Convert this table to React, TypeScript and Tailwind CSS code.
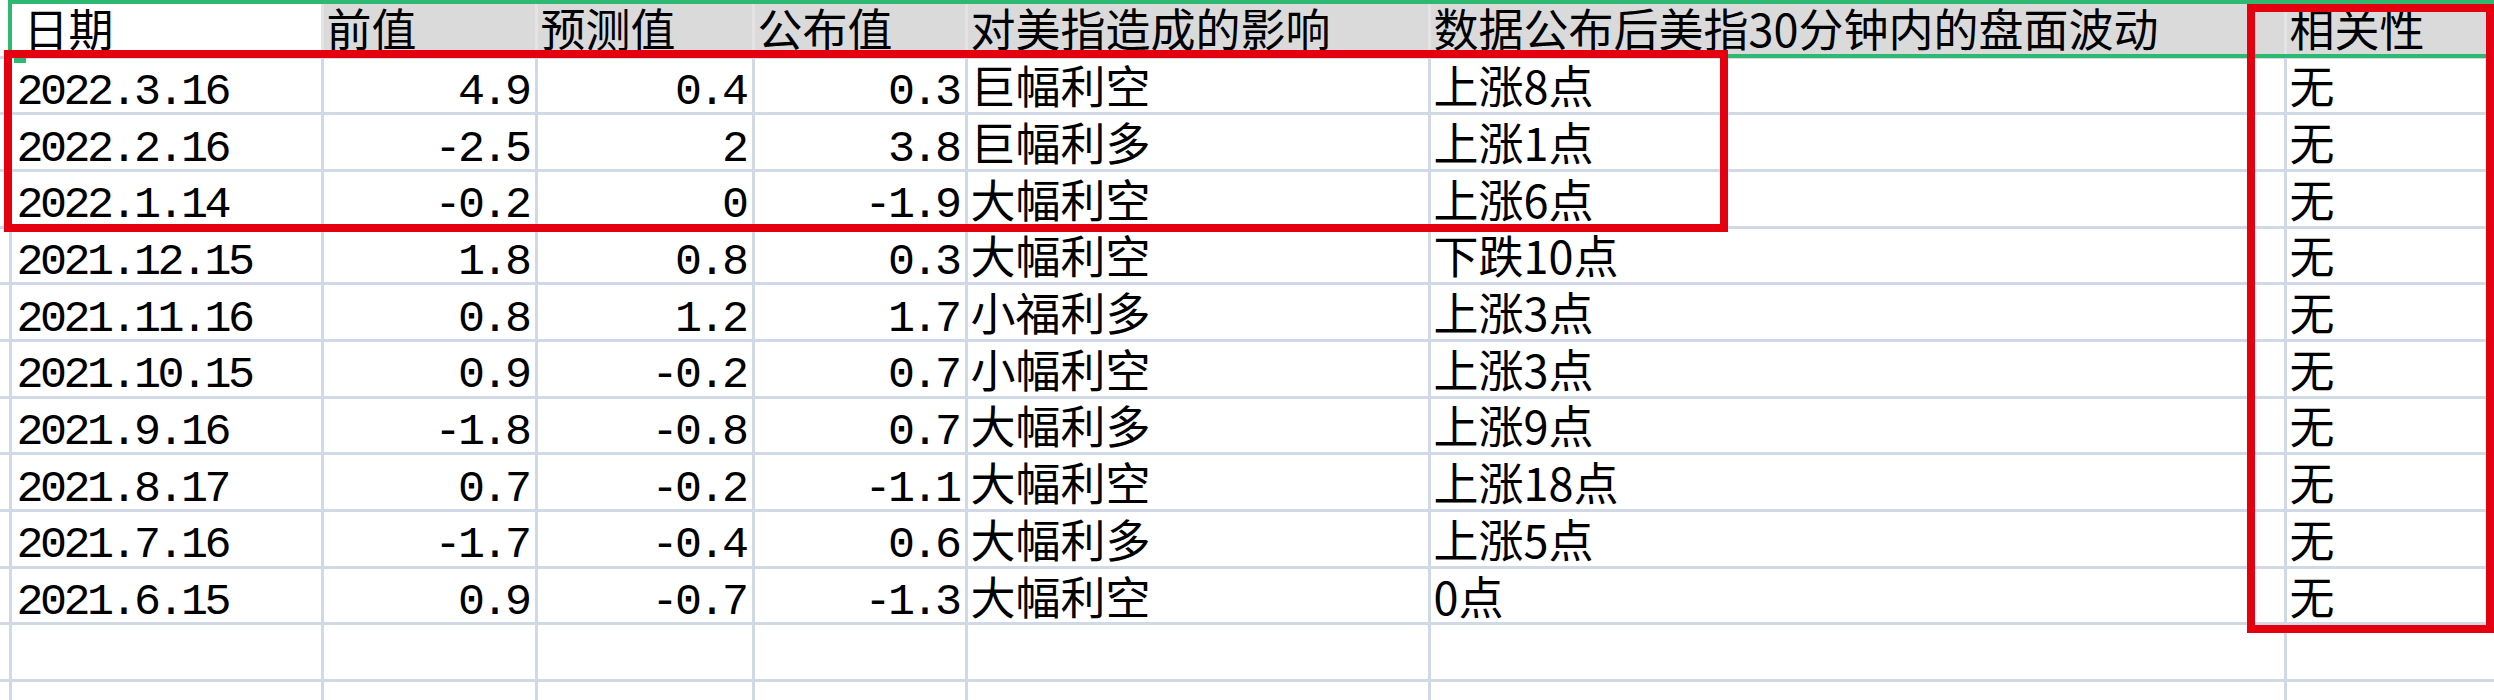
const widths = ['w-[312px]', 'w-[214px]', 'w-[217px]', 'w-[213px]', 'w-[463px]', 'w-[856px]', 'w-[420px]']

const headers = ['日期', '前值', '预测值', '公布值', '对美指造成的影响', '数据公布后美指30分钟内的盘面波动', '相关性']

const rows: string[][] = [
  ['2022.3.16', '4.9', '0.4', '0.3', '巨幅利空', '上涨8点', '无'],
  ['2022.2.16', '-2.5', '2', '3.8', '巨幅利多', '上涨1点', '无'],
  ['2022.1.14', '-0.2', '0', '-1.9', '大幅利空', '上涨6点', '无'],
  ['2021.12.15', '1.8', '0.8', '0.3', '大幅利空', '下跌10点', '无'],
  ['2021.11.16', '0.8', '1.2', '1.7', '小福利多', '上涨3点', '无'],
  ['2021.10.15', '0.9', '-0.2', '0.7', '小幅利空', '上涨3点', '无'],
  ['2021.9.16', '-1.8', '-0.8', '0.7', '大幅利多', '上涨9点', '无'],
  ['2021.8.17', '0.7', '-0.2', '-1.1', '大幅利空', '上涨18点', '无'],
  ['2021.7.16', '-1.7', '-0.4', '0.6', '大幅利多', '上涨5点', '无'],
  ['2021.6.15', '0.9', '-0.7', '-1.3', '大幅利空', '0点', '无'],
  ['', '', '', '', '', '', ''],
  ['', '', '', '', '', '', ''],
]

const cjk = "font-['Noto_Sans_CJK_SC',sans-serif] text-[45px] leading-[50px]"
const mono = "font-['Liberation_Mono','Noto_Sans_CJK_SC',monospace] text-[45px] leading-[36px] tracking-[-3.5px] pt-[15px]"

function Cell({ i, value }: { i: number; value: string }) {
  const base = `${widths[i]} shrink-0 h-full flex items-center border-r-[3px] border-[#d2d9e6] whitespace-nowrap`
  if (i === 0) return <div className={`${base} ${mono} pl-[5px]`}>{value}</div>
  if (i < 4) return <div className={`${base} ${mono} justify-end pr-[6px]`}>{value}</div>
  return <div className={`${base} ${cjk} pl-[3px]`}>{value}</div>
}

export default function App() {
  return (
    <div className="relative w-[2494px] h-[700px] overflow-hidden bg-white text-black">
      {/* header row */}
      <div className="flex h-[58.5px] border-b-[3px] border-[#d2d9e6]">
        <div className="w-[11.5px] shrink-0 h-full border-r-[3px] border-[#d2d9e6]" />
        {headers.map((h, i) => (
          <div
            key={i}
            className={`${widths[i]} shrink-0 h-full flex items-center border-r-[3px] border-[#e4e4e4] ${cjk} whitespace-nowrap ${
              i === 0 ? 'bg-white pl-[12px]' : 'bg-[#dadada] pl-[3px]'
            }`}
          >
            {h}
          </div>
        ))}
      </div>

      {/* data rows */}
      {rows.map((r, ri) => (
        <div key={ri} className="flex h-[56.7px] border-b-[3px] border-[#d2d9e6]">
          <div className="w-[11.5px] shrink-0 h-full border-r-[3px] border-[#d2d9e6]" />
          {r.map((v, i) => (
            <Cell key={i} i={i} value={v} />
          ))}
        </div>
      ))}

      {/* selection of header row */}
      <div className="absolute left-[8px] top-0 w-[2600px] h-[58px] border-[4px] border-[#2eb872]" />
      <div className="absolute left-[14px] top-[54px] w-[12px] h-[9px] bg-[#2eb872]" />

      {/* red highlight boxes */}
      <div className="absolute left-[4px] top-[50px] w-[1724px] h-[182px] border-[8px] border-[#e5000f]" />
      <div className="absolute left-[2247px] top-[4px] w-[247px] h-[629px] border-[8px] border-[#e5000f]" />
    </div>
  )
}
